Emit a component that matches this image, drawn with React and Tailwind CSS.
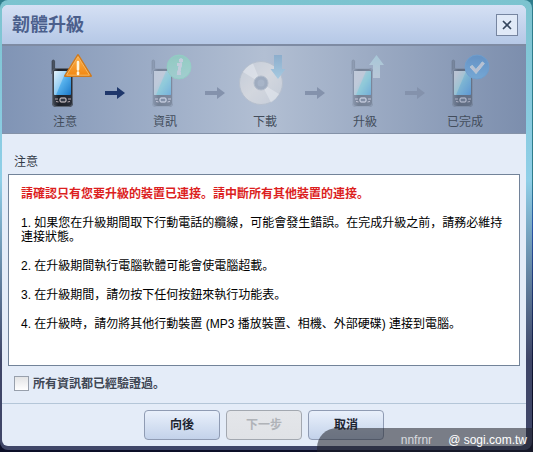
import React, { useState } from 'react';
import { X } from 'lucide-react';

const Phone = () => (
  <g>
    <path d="M17 24V11.500q0-1.500 1.300-1.500t1.300 1.500V24" fill="#4a5361" stroke="#2c323d" strokeWidth="0.600" />
    <rect x="17" y="18" width="21" height="39" rx="4" fill="url(#shell)" />
    <rect x="17.500" y="18.500" width="20" height="38" rx="3.500" fill="none" stroke="#5d6674" />
    <rect x="19" y="21" width="17" height="24" rx="1" fill="url(#screen)" />
    <path d="M19 21h12L21 45h-2z" fill="#fff" fillOpacity="0.350" />
    <rect x="25" y="48" width="6" height="4" rx="1" fill="#343b48" stroke="#e3d9dc" />
    <path d="M20 49h3M21 51.500l2.500.500M33 49h3M35 51.500l-2.500.500" stroke="#b5a6ad" />
  </g>
);

const WarningBadge = () => (
  <g>
    <path d="M43 5 56 26H30z" fill="url(#warning)" stroke="#d07a1c" strokeWidth="2" strokeLinejoin="round" />
    <path d="M43 6.500 54.500 25.200h-23z" fill="none" stroke="#ffc873" strokeWidth="0.800" strokeLinejoin="round" />
    <path d="M43 12v7.500M43 22.500v1.500" stroke="#fff7de" strokeWidth="2.600" strokeLinecap="round" />
  </g>
);

const InfoBadge = () => (
  <g>
    <circle cx="44" cy="17" r="12" fill="url(#info)" stroke="#4fae7c" />
    <circle cx="46" cy="10.500" r="1.900" fill="#fff" />
    <path d="M42 14.500h3.500L43.500 23.500h2.500" fill="none" stroke="#fff" strokeWidth="2.600" />
  </g>
);

const DoneBadge = () => (
  <g>
    <circle cx="42" cy="17" r="12" fill="url(#done)" stroke="#3f86c0" />
    <path d="m36 16 5 5.500 7.500-9" fill="none" stroke="#fff" strokeWidth="3.200" />
  </g>
);

const Disc = () => (
  <g>
    <circle cx="26" cy="33" r="21.500" fill="url(#disc)" stroke="#b9c1cc" />
    <path d="M26 33 8 22A21 21 0 0 1 18 13.500zM26 33l18 11a21 21 0 0 1-8 8.500z" fill="#fff" fillOpacity="0.500" />
    <circle cx="26" cy="33" r="7" fill="#98a5b8" stroke="#b3bcc9" />
    <circle cx="26" cy="33" r="3.500" fill="#a4b1c4" />
    <path d="M39 5h8v14h3.500L43 29l-7.500-10H39z" fill="url(#arrow)" />
  </g>
);

const UpArrow = () => <path d="M38 28V15h-4l7.500-10L49 15h-4v13z" fill="url(#arrow)" />;

const steps = [
  { label: '注意', tone: '', art: <><Phone /><WarningBadge /></> },
  { label: '資訊', tone: 'opacity-35 brightness-150', art: <><Phone /><InfoBadge /></> },
  { label: '下載', tone: 'opacity-70', art: <Disc /> },
  { label: '升級', tone: 'opacity-35 brightness-150', art: <><Phone /><UpArrow /></> },
  { label: '已完成', tone: 'opacity-40 brightness-125', art: <><Phone /><DoneBadge /></> },
];

const notes = [
  '1. 如果您在升級期間取下行動電話的纜線，可能會發生錯誤。在完成升級之前，請務必維持連接狀態。',
  '2. 在升級期間執行電腦軟體可能會使電腦超載。',
  '3. 在升級期間，請勿按下任何按鈕來執行功能表。',
  '4. 在升級時，請勿將其他行動裝置 (MP3 播放裝置、相機、外部硬碟) 連接到電腦。',
];

// Shared gradients for the step icons
const Gradients = () => (
  <svg className="absolute h-0 w-0" aria-hidden="true">
    <defs>
      <linearGradient id="shell" x1="0" y1="0" x2="1" y2="0">
        <stop offset="0" stopColor="#4a515e" />
        <stop offset="0.300" stopColor="#1c2028" />
        <stop offset="1" stopColor="#2b303a" />
      </linearGradient>
      <linearGradient id="screen" x1="0" y1="0" x2="1" y2="1">
        <stop offset="0" stopColor="#d5ecfb" />
        <stop offset="0.500" stopColor="#55b0ec" />
        <stop offset="1" stopColor="#1b78c8" />
      </linearGradient>
      <linearGradient id="warning" x1="0" y1="0" x2="0" y2="1">
        <stop offset="0" stopColor="#fbb04c" />
        <stop offset="1" stopColor="#f18712" />
      </linearGradient>
      <linearGradient id="info" x1="0" y1="0" x2="0" y2="1">
        <stop offset="0" stopColor="#4f9f78" />
        <stop offset="1" stopColor="#6cc193" />
      </linearGradient>
      <linearGradient id="done" x1="0" y1="0" x2="0" y2="1">
        <stop offset="0" stopColor="#2a6fb0" />
        <stop offset="1" stopColor="#4a9ad4" />
      </linearGradient>
      <linearGradient id="arrow" x1="0" y1="0" x2="0" y2="1">
        <stop offset="0" stopColor="#7fa8cb" />
        <stop offset="1" stopColor="#a3d0e8" />
      </linearGradient>
      <linearGradient id="disc" x1="0" y1="0" x2="1" y2="1">
        <stop offset="0" stopColor="#ced3dc" />
        <stop offset="0.500" stopColor="#e2e2e4" />
        <stop offset="1" stopColor="#ccd2dc" />
      </linearGradient>
    </defs>
  </svg>
);

const Arrow = ({ active }) => (
  <svg
    viewBox="0 0 20 14"
    className={`mx-2.5 mt-9 h-3.5 w-5 shrink-0 ${active ? 'text-[#1f376b]' : 'text-[#8492ac]'}`}
    aria-hidden="true"
  >
    <path d="M0 5h12V1l8 6-8 6V9H0z" fill="currentColor" />
  </svg>
);

const Step = ({ step }) => (
  <li className="flex w-[60px] shrink-0 flex-col items-center">
    <svg viewBox="0 0 60 60" className={`h-[60px] w-[60px] ${step.tone}`} aria-hidden="true">
      {step.art}
    </svg>
    <span className="mt-1 text-xs text-[#434d5c]">{step.label}</span>
  </li>
);

const buttonStyle =
  'h-[30px] w-[76px] rounded border border-[#8f9bb3] bg-linear-to-b from-[#e9f0fb] to-[#c3d2ea] font-bold text-[#1d2430] disabled:border-[#a3a8b0] disabled:from-[#e4e6ea] disabled:to-[#e0e2e6] disabled:text-[#b0b3b8]';

export default function App() {
  const [verified, setVerified] = useState(false);

  return (
    <div className="relative flex min-h-screen flex-col overflow-hidden bg-linear-to-b from-[#2f7d8c] from-40% via-[#2a55a8] via-50% to-[#0c0f28] to-85% pr-px pb-0.5 font-['Liberation_Sans','Noto_Sans_CJK_JP',sans-serif] text-xs">
      <Gradients />
      <div className="flex flex-1 flex-col rounded-lg bg-linear-to-b from-[#7cc3cf] from-0% via-[#8fcfe8] via-40% to-[#3f4668] to-80% pt-[5px] pr-1.5 pb-1 pl-0.5">
        <main className="flex flex-1 flex-col overflow-hidden rounded-md bg-[#e4ecf8]">
          <header className="flex h-[39px] items-center justify-between bg-linear-to-b from-[#d5e0f4] to-[#b5c8e6] pr-2 pl-2.5">
            <h1 className="text-lg font-bold text-[#4b5f8c]">韌體升級</h1>
            <button
              type="button"
              aria-label="關閉"
              className="flex h-[22px] w-[22px] items-center justify-center border border-[#7685a0] bg-[#e0e9f7] text-[#35465e]"
            >
              <X className="h-3.5 w-3.5" strokeWidth={3} />
            </button>
          </header>

          <ol className="flex h-[90px] justify-center border-t-2 border-b border-t-[#7e8ba3] border-b-[#8492a8] bg-linear-to-r from-[#8094b5] via-[#b2bfd3] via-50% to-[#7c8ead] pt-1 pl-0.5">
            {steps.map((step, i) => (
              <React.Fragment key={step.label}>
                {i > 0 && <Arrow active={i === 1} />}
                <Step step={step} />
              </React.Fragment>
            ))}
          </ol>

          <section className="flex flex-1 flex-col px-1.5 pt-5 pb-3">
            <h2 className="mb-1 pl-1.5 text-[#343b48]">注意</h2>
            <div className="flex-1 border border-[#728399] bg-white px-3 pt-3 leading-[14px] text-black">
              <p className="mb-[15px] font-bold text-[#dc1f1f]">
                請確認只有您要升級的裝置已連接。請中斷所有其他裝置的連接。
              </p>
              {notes.map((note) => (
                <p key={note} className="mb-[15px]">{note}</p>
              ))}
            </div>
            <label className="mt-2.5 flex items-center gap-1 pl-1.5 leading-[14px] font-bold text-[#3f4754]">
              <input
                type="checkbox"
                checked={verified}
                onChange={(e) => setVerified(e.target.checked)}
                className="h-[15px] w-[15px] appearance-none border border-[#98a0ac] bg-linear-to-b from-[#e3e4e6] to-white checked:from-[#4b5f8c]"
              />
              所有資訊都已經驗證過。
            </label>
          </section>

          <footer className="flex justify-center gap-1.5 border-t border-[#b4c6d8] pt-1.5 pb-1.5">
            <button type="button" className={buttonStyle}>向後</button>
            <button type="button" disabled={!verified} className={buttonStyle}>下一步</button>
            <button type="button" className={buttonStyle}>取消</button>
          </footer>
        </main>
      </div>

      <div className="absolute right-0 bottom-0 flex h-6 w-[216px] items-center justify-end gap-4 rounded-tl-[20px] bg-[#20232a]/55 pr-1.5 text-white">
        <span className="text-[#d8dade]">nnfrnr</span>
        <span>@ sogi.com.tw</span>
      </div>
    </div>
  );
}
